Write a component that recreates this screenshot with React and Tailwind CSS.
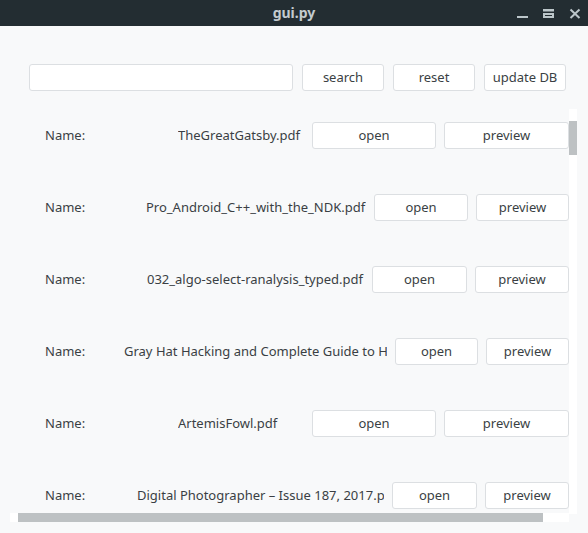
import React from "react";

const rows = [
  { name: "TheGreatGatsby.pdf", nameW: "w-[133px]", openW: "w-[124px]", prevW: "w-[125px]" },
  { name: "Pro_Android_C++_with_the_NDK.pdf", nameW: "w-[101px]", openW: "w-[94px]", prevW: "w-[93px]" },
  { name: "032_algo-select-ranalysis_typed.pdf", nameW: "w-[102px]", openW: "w-[95px]", prevW: "w-[94px]" },
  { name: "Gray Hat Hacking and Complete Guide to H", nameW: "w-[79px]", openW: "w-[83px]", prevW: "w-[83px]" },
  { name: "ArtemisFowl.pdf", nameW: "w-[133px]", openW: "w-[124px]", prevW: "w-[125px]" },
  { name: "Digital Photographer – Issue 187, 2017.p", nameW: "w-[92px]", openW: "w-[85px]", prevW: "w-[84px]" },
];

function Btn({ children, className = "" }) {
  return (
    <div
      className={`h-[27px] shrink-0 flex items-center justify-center bg-white border border-[#dcdfe2] rounded-[3px] text-[13px] text-[#3a3f44] ${className}`}
    >
      {children}
    </div>
  );
}

export default function App() {
  return (
    <div
      className="w-[588px] h-[533px] bg-[#f8f9fa] flex flex-col overflow-hidden"
      style={{ fontFamily: '"Noto Sans", "DejaVu Sans", sans-serif' }}
    >
      {/* title bar */}
      <div className="h-[26px] shrink-0 bg-[#232d32] grid grid-cols-[1fr_auto_1fr] items-center">
        <div />
        <div className="text-[14px] font-bold text-[#c3cbcf] leading-none">gui.py</div>
        <div className="flex justify-end pr-[7px]">
          <svg width="66" height="26" viewBox="0 0 66 26" fill="none">
            <rect x="2" y="16" width="11" height="2" fill="#bcc6ca" />
            <rect x="28" y="9" width="11" height="2.5" fill="#bcc6ca" />
            <rect x="29" y="14" width="9" height="3" stroke="#bcc6ca" strokeWidth="2" />
            <path d="M55.5 9.5 L64.5 18 M64.5 9.5 L55.5 18" stroke="#bcc6ca" strokeWidth="2" />
          </svg>
        </div>
      </div>

      {/* search row */}
      <div className="mt-[38px] ml-[29px] flex items-center gap-[9px]">
        <div className="w-[264px] h-[27px] bg-white border border-[#dcdfe2] rounded-[3px]" />
        <Btn className="w-[82px]">search</Btn>
        <Btn className="w-[82px]">reset</Btn>
        <Btn className="w-[82px]">update DB</Btn>
      </div>

      {/* scroll area */}
      <div className="mt-[17px] ml-[10px] w-[567px] h-[414px] flex flex-col">
        <div className="flex h-[405px]">
          <div className="w-[559px] h-full overflow-hidden">
            <div className="pt-[14px] pl-[35px] flex flex-col gap-[45px]">
              {rows.map((r, i) => (
                <div key={i} className="flex items-center h-[27px] text-[13px] text-[#3a3f44]">
                  <div className={`${r.nameW} shrink-0 whitespace-nowrap`}>Name:</div>
                  <div className="flex-1 min-w-0 overflow-hidden whitespace-nowrap">{r.name}</div>
                  <Btn className={`${r.openW} ml-[8px]`}>open</Btn>
                  <Btn className={`${r.prevW} ml-[8px]`}>preview</Btn>
                </div>
              ))}
            </div>
          </div>
          <div className="w-[8px] h-full bg-white pt-[12px]" style={{ marginTop: 1 }}>
            <div className="w-full h-[34px] bg-[#bdc1c3]" />
          </div>
        </div>
        <div className="flex h-[9px]">
          <div className="w-[559px] h-full bg-white pl-[8px]">
            <div className="w-[525px] h-full bg-[#bdc1c3]" />
          </div>
        </div>
      </div>
    </div>
  );
}
